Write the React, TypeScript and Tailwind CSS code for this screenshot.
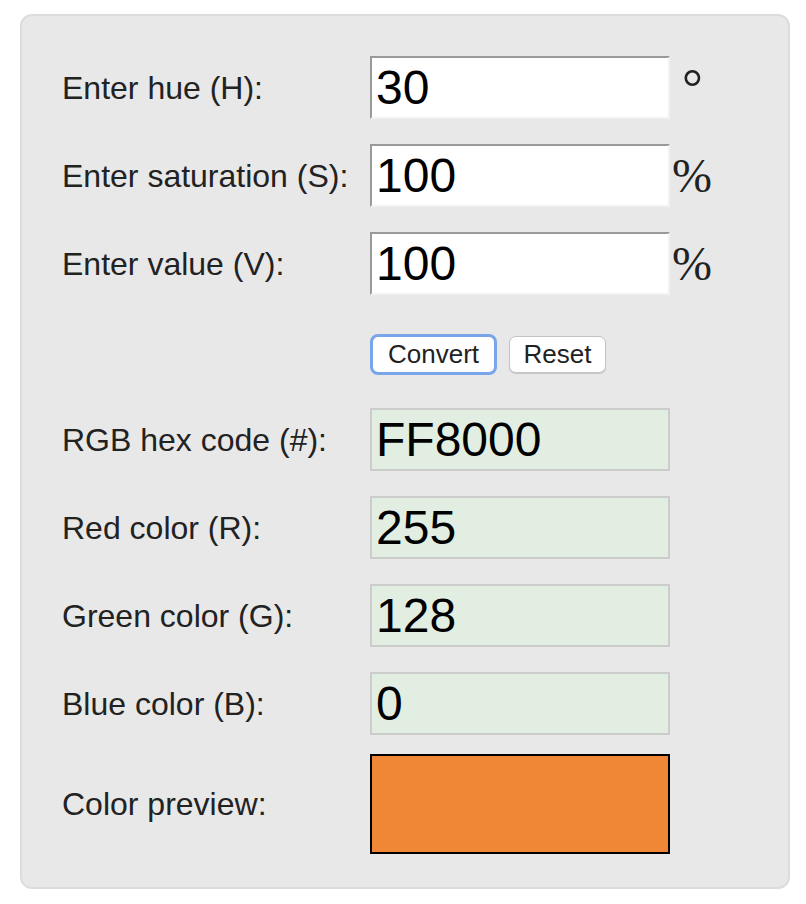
import React from 'react';

const font = { fontFamily: '"Liberation Sans", Arial, Helvetica, sans-serif' };
const serif = { fontFamily: '"Liberation Serif", "Times New Roman", serif' };

const inputRows = [
  { label: 'Enter hue (H):', value: '30', unit: '°' },
  { label: 'Enter saturation (S):', value: '100', unit: '%' },
  { label: 'Enter value (V):', value: '100', unit: '%' },
];

const outputRows = [
  { label: 'RGB hex code (#):', value: 'FF8000' },
  { label: 'Red color (R):', value: '255' },
  { label: 'Green color (G):', value: '128' },
  { label: 'Blue color (B):', value: '0' },
];

const Label: React.FC<{ text: string }> = ({ text }) => (
  <div className="w-[308px] shrink-0 text-[32px] leading-none text-[#222]">{text}</div>
);

export default function App() {
  return (
    <div className="min-h-screen bg-white pt-[14px] pl-5" style={font}>
      <div className="w-[770px] rounded-[12px] border-2 border-[#dcdcdc] bg-[#e8e8e8] pl-[40px] pt-[40px] pb-[33px]">
        {/* inputs */}
        <div className="flex flex-col gap-[25px]">
          {inputRows.map((row) => (
            <div key={row.label} className="flex h-[63px] items-center">
              <Label text={row.label} />
              <input
                readOnly
                value={row.value}
                className="h-[63px] w-[300px] border-2 border-t-[#9a9a9a] border-l-[#9a9a9a] border-b-[#f2f2f2] border-r-[#f2f2f2] bg-white pl-1 text-[48px] text-black outline-none"
                style={font}
              />
              <span
                className={
                  row.unit === '°'
                    ? 'ml-[12px] text-[52px] leading-none text-[#222]'
                    : 'ml-[2px] text-[48px] leading-none text-[#222]'
                }
                style={serif}
              >
                {row.unit}
              </span>
            </div>
          ))}
        </div>

        {/* buttons */}
        <div className="mt-[39px] flex h-[41px] items-center pl-[308px]">
          <button className="flex h-[41px] w-[127px] items-center justify-center rounded-[8px] border-[3px] border-[#79a5ea] bg-white text-[26px] text-[#222]">
            Convert
          </button>
          <button className="ml-3 flex h-[37px] w-[97px] items-center justify-center rounded-[7px] border border-[#c4c4c4] bg-white text-[26px] text-[#222] shadow-[0_1px_1px_rgba(0,0,0,0.15)]">
            Reset
          </button>
        </div>

        {/* results */}
        <div className="mt-[33px] flex flex-col gap-[25px]">
          {outputRows.map((row) => (
            <div key={row.label} className="flex h-[63px] items-center">
              <Label text={row.label} />
              <input
                readOnly
                value={row.value}
                className="h-[63px] w-[300px] border-2 border-[#cccccc] bg-[#e2eee2] pl-1 text-[48px] text-black outline-none"
                style={font}
              />
            </div>
          ))}
          <div className="-mt-[6px] flex h-[100px] items-center">
            <Label text="Color preview:" />
            <div className="h-[100px] w-[300px] border-2 border-black bg-[#f08736]" />
          </div>
        </div>
      </div>
    </div>
  );
}
